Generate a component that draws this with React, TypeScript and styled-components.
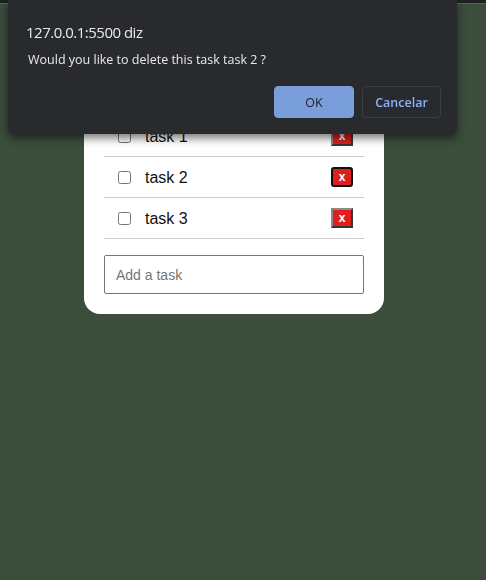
import React from "react";
import styled, { createGlobalStyle } from "styled-components";

const GlobalStyle = createGlobalStyle`
  html, body {
    margin: 0;
    padding: 0;
    background: #3c4d3c;
    height: 100%;
  }
  #root { min-height: 100%; }
`;

const Page = styled.div`
  min-height: 580px;
  padding: 40px 0 0 84px;
  box-sizing: border-box;
  font-family: "Liberation Sans", Arial, sans-serif;
`;

const Card = styled.div`
  width: 300px;
  box-sizing: border-box;
  background: #ffffff;
  border-radius: 16px;
  padding: 20px 20px 20px 20px;
`;

const Title = styled.h2`
  margin: 0 0 14px;
  font-size: 24px;
  line-height: 42px;
  text-align: center;
  color: #222;
`;

const List = styled.ul`
  list-style: none;
  margin: 0 0 16px;
  padding: 0;
`;

const Row = styled.li`
  display: flex;
  align-items: center;
  height: 40px;
  border-bottom: 1px solid #cccccc;
  padding: 0 11px 0 14px;
`;

const Check = styled.input`
  width: 13px;
  height: 13px;
  margin: 1px 14px 0 0;
`;

const Label = styled.span`
  flex: 1;
  font-size: 16px;
  line-height: 20px;
  padding-top: 2px;
  color: #111;
`;

const DeleteBtn = styled.button<{ $focused?: boolean }>`
  width: 22px;
  height: 20px;
  padding: 0;
  background: #dd1f1f;
  color: #ffffff;
  font-family: "Liberation Sans", Arial, sans-serif;
  font-weight: bold;
  font-size: 12px;
  line-height: 14px;
  border: 2px outset #8a8a8a;
  border-radius: ${(p) => (p.$focused ? "3px" : "0")};
  ${(p) => (p.$focused ? "border: 2px solid #111; outline: none;" : "")}
`;

const TaskInput = styled.input`
  display: block;
  width: 100%;
  height: 39px;
  box-sizing: border-box;
  border: 1px solid #767676;
  border-radius: 2px;
  padding: 0 11px;
  font-family: "Liberation Sans", Arial, sans-serif;
  font-size: 14px;
  &::placeholder { color: #757575; }
`;

const TopStrip = styled.div`
  position: fixed;
  top: 0;
  left: 0;
  right: 0;
  height: 3px;
  background: #1e1f21;
  border-bottom: 1px solid #5c5e62;
  z-index: 5;
`;

const Dialog = styled.div`
  position: fixed;
  top: 0;
  left: 8px;
  width: 449px;
  height: 134px;
  box-sizing: border-box;
  background: #292a2d;
  border-radius: 0 0 6px 6px;
  box-shadow: 0 4px 10px rgba(0, 0, 0, 0.55);
  padding: 22px 16px 16px 18px;
  display: flex;
  flex-direction: column;
  font-family: "Open Sans", "Noto Sans", sans-serif;
  z-index: 10;
`;

const DialogTitle = styled.div`
  font-size: 15px;
  letter-spacing: -0.5px;
  line-height: 20px;
  color: #e8eaed;
  margin-bottom: 9px;
`;

const DialogMsg = styled.div`
  font-size: 12.5px;
  line-height: 18px;
  color: #e8eaed;
  padding-left: 2px;
`;

const Actions = styled.div`
  margin-top: auto;
  display: flex;
  justify-content: flex-end;
  gap: 8px;
`;

const DlgButton = styled.button<{ $primary?: boolean }>`
  height: 32px;
  width: ${(p) => (p.$primary ? "80px" : "79px")};
  border-radius: 4px;
  font-family: "Open Sans", "Noto Sans", sans-serif;
  font-size: 12.5px;
  font-weight: ${(p) => (p.$primary ? 500 : 600)};
  background: ${(p) => (p.$primary ? "#7a9ed9" : "#292a2d")};
  color: ${(p) => (p.$primary ? "#202124" : "#8ab4f8")};
  border: 1px solid ${(p) => (p.$primary ? "#7a9ed9" : "#3c3e42")};
  padding: 0;
`;

const tasks = ["task 1", "task 2", "task 3"];

export default function App() {
  return (
    <>
      <GlobalStyle />
      <Page>
        <Card>
          <Title>To-Do List</Title>
          <List>
            {tasks.map((t, i) => (
              <Row key={t}>
                <Check type="checkbox" />
                <Label>{t}</Label>
                <DeleteBtn $focused={i === 1}>x</DeleteBtn>
              </Row>
            ))}
          </List>
          <TaskInput placeholder="Add a task" />
        </Card>
      </Page>
      <TopStrip />
      <Dialog>
        <DialogTitle>127.0.0.1:5500 diz</DialogTitle>
        <DialogMsg>Would you like to delete this task task 2 ?</DialogMsg>
        <Actions>
          <DlgButton $primary>OK</DlgButton>
          <DlgButton>Cancelar</DlgButton>
        </Actions>
      </Dialog>
    </>
  );
}
